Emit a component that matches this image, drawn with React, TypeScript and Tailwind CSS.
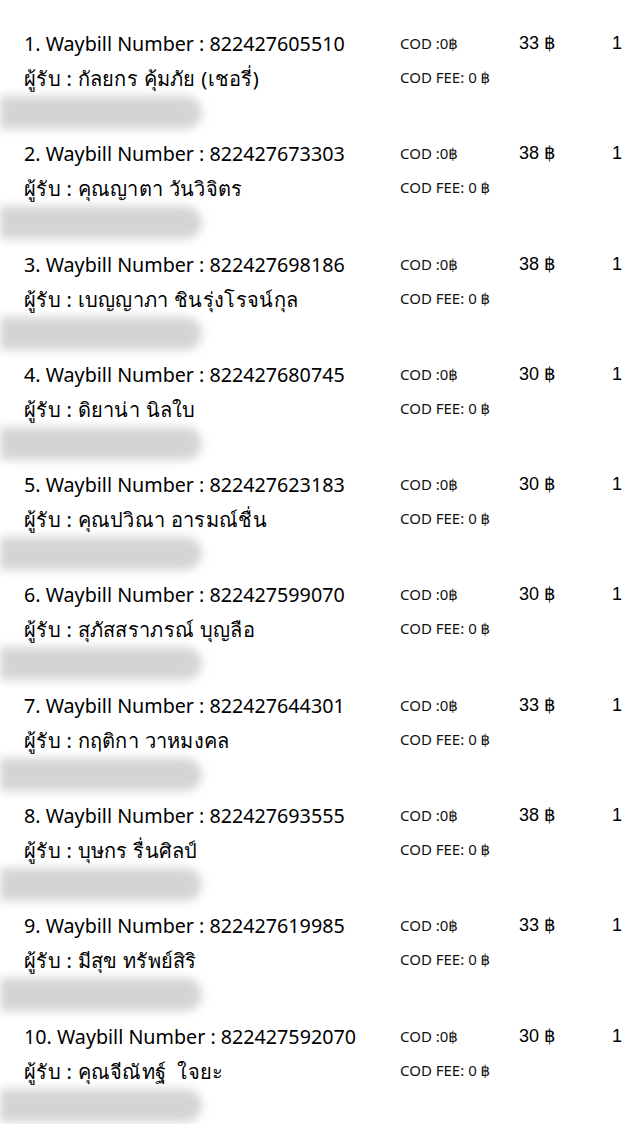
import React from 'react';

interface Waybill {
  no: string;
  name: string;
  price: number;
}

const rows: Waybill[] = [
  { no: '822427605510', name: 'กัลยกร คุ้มภัย (เชอรี่)', price: 33 },
  { no: '822427673303', name: 'คุณญาตา วันวิจิตร', price: 38 },
  { no: '822427698186', name: 'เบญญาภา ชินรุ่งโรจน์กุล', price: 38 },
  { no: '822427680745', name: 'ดิยาน่า นิลใบ', price: 30 },
  { no: '822427623183', name: 'คุณปวิณา อารมณ์ชื่น', price: 30 },
  { no: '822427599070', name: 'สุภัสสราภรณ์ บุญลือ', price: 30 },
  { no: '822427644301', name: 'กฤติกา วาหมงคล', price: 33 },
  { no: '822427693555', name: 'บุษกร รื่นศิลป์', price: 38 },
  { no: '822427619985', name: 'มีสุข ทรัพย์สิริ', price: 33 },
  { no: '822427592070', name: 'คุณจีณัทฐ์  ใจยะ', price: 30 },
];

const Row: React.FC<{ index: number; item: Waybill }> = ({ index, item }) => (
  <div className="flex h-[110.3px] text-black">
    <div className="w-[400px] shrink-0 pt-[26px]">
      <div className="pl-[24px] text-[19.7px] leading-[35px] whitespace-pre">
        {index}. Waybill Number : {item.no}
      </div>
      <div className="pl-[24px] text-[20px] tracking-[0.3px] leading-[35px] whitespace-pre">ผู้รับ : {item.name}</div>
      <div className="h-[33px] w-[202px] rounded-r-full bg-[#d4d4d4] blur-[5px]" />
    </div>
    <div className="w-[119px] shrink-0 pt-[26px] text-[15px] text-[#111]">
      <div className="leading-[34px]">COD :0฿</div>
      <div className="leading-[35px]">COD FEE: 0 ฿</div>
    </div>
    <div className="w-[93px] shrink-0 pt-[26px] text-[18px] leading-[34px] font-['Liberation_Sans',sans-serif]">
      {item.price} ฿
    </div>
    <div className="pt-[26px] text-[18px] leading-[34px] font-['Liberation_Sans',sans-serif]">1</div>
  </div>
);

export default function App() {
  return (
    <div className="w-[629px] h-[1124px] overflow-hidden bg-white font-['Noto_Sans','DejaVu_Sans',sans-serif]">
      {rows.map((r, i) => (
        <Row key={r.no} index={i + 1} item={r} />
      ))}
    </div>
  );
}
